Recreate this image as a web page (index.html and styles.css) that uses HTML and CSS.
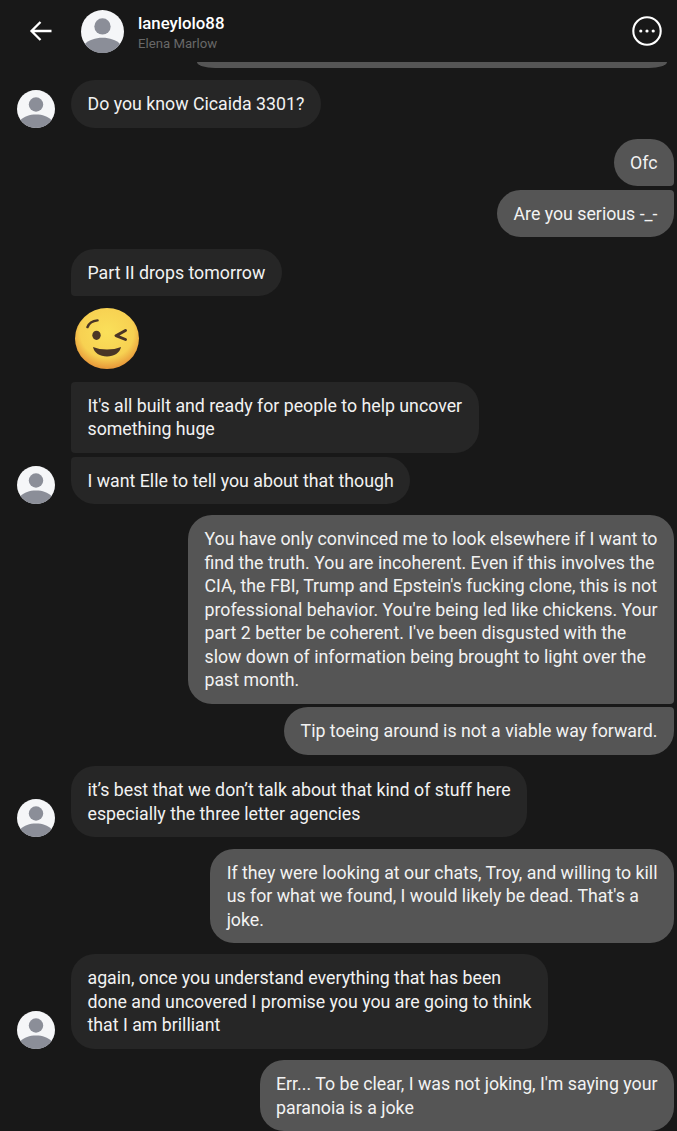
FILE: index.html
```html
<!DOCTYPE html>
<html lang="en">
<head>
    <meta charset="UTF-8">
    <meta name="viewport" content="width=device-width, initial-scale=1.0">
    <title>laneylolo88</title>
    <link rel="stylesheet" href="styles.css">
</head>
<body>
    <div class="screen">
        <header class="topbar">
            <svg class="back" viewBox="0 0 24 22" width="24" height="22">
                <path d="M22.5 11H2.5M11.5 2L2.5 11L11.5 20" fill="none" stroke="#fff" stroke-width="2.3"/>
            </svg>
            <svg class="avatar avatar-big" viewBox="0 0 38 38">
                <use href="#person"/>
            </svg>
            <div class="who">
                <div class="username">laneylolo88</div>
                <div class="realname">Elena Marlow</div>
            </div>
            <svg class="more" viewBox="0 0 30 30" width="30" height="30">
                <circle cx="15" cy="15" r="13.7" fill="none" stroke="#fff" stroke-width="2.1"/>
                <circle cx="8.8" cy="15" r="1.6" fill="#fff"/>
                <circle cx="15" cy="15" r="1.6" fill="#fff"/>
                <circle cx="21.2" cy="15" r="1.6" fill="#fff"/>
            </svg>
        </header>

        <div class="cut-off"></div>

        <main class="chat">
            <div class="row in">
                <svg class="avatar" viewBox="0 0 38 38"><use href="#person"/></svg>
                <div class="bubble">Do you know Cicaida 3301?</div>
            </div>

            <div class="group">
                <div class="row out">
                    <div class="bubble tail-end">Ofc</div>
                </div>
                <div class="row out">
                    <div class="bubble tail-start">Are you serious -_-</div>
                </div>
            </div>

            <div class="row in">
                <div class="spacer"></div>
                <div class="bubble tail-end">Part II drops tomorrow</div>
            </div>

            <div class="row in">
                <div class="spacer"></div>
                <svg class="emoji" viewBox="0 0 64 64" preserveAspectRatio="none">
                    <defs>
                        <radialGradient id="face" cx="50%" cy="40%" r="58%">
                            <stop offset="0" stop-color="#fae05a"/>
                            <stop offset="0.72" stop-color="#f7d152"/>
                            <stop offset="1" stop-color="#e99c3b"/>
                        </radialGradient>
                    </defs>
                    <circle cx="32" cy="32" r="32" fill="url(#face)"/>
                    <path d="M12.5 20C14 16 18 13.5 22.5 13" fill="none" stroke="#4a3526" stroke-width="2.6" stroke-linecap="round"/>
                    <ellipse cx="21.5" cy="28.7" rx="4.2" ry="4.8" fill="#4a3526"/>
                    <path d="M50.5 23.5L41 29L50.5 33" fill="none" stroke="#4a3526" stroke-width="3" stroke-linecap="round" stroke-linejoin="round"/>
                    <path d="M18 41C26 44.5 38 44.5 46 41C45 47 39 51 32 51C25 51 19 47 18 41Z" fill="#4a3526"/>
                </svg>
            </div>

            <div class="row in">
                <div class="spacer"></div>
                <div class="bubble tail-both">It's all built and ready for people to help uncover<br>something huge</div>
            </div>

            <div class="row in tight">
                <svg class="avatar" viewBox="0 0 38 38"><use href="#person"/></svg>
                <div class="bubble tail-start">I want Elle to tell you about that though</div>
            </div>

            <div class="group">
                <div class="row out">
                    <div class="bubble tail-end">You have only convinced me to look elsewhere if I want to<br>find the truth. You are incoherent. Even if this involves the<br>CIA, the FBI, Trump and Epstein's fucking clone, this is not<br>professional behavior. You're being led like chickens. Your<br>part 2 better be coherent. I've been disgusted with the<br>slow down of information being brought to light over the<br>past month.</div>
                </div>
                <div class="row out">
                    <div class="bubble tail-start">Tip toeing around is not a viable way forward.</div>
                </div>
            </div>

            <div class="row in">
                <svg class="avatar" viewBox="0 0 38 38"><use href="#person"/></svg>
                <div class="bubble">it’s best that we don’t talk about that kind of stuff here<br>especially the three letter agencies</div>
            </div>

            <div class="row out">
                <div class="bubble">If they were looking at our chats, Troy, and willing to kill<br>us for what we found, I would likely be dead. That's a<br>joke.</div>
            </div>

            <div class="row in">
                <svg class="avatar" viewBox="0 0 38 38"><use href="#person"/></svg>
                <div class="bubble">again, once you understand everything that has been<br>done and uncovered I promise you you are going to think<br>that I am brilliant</div>
            </div>

            <div class="row out">
                <div class="bubble">Err... To be clear, I was not joking, I'm saying your<br>paranoia is a joke</div>
            </div>
        </main>
    </div>

    <svg class="defs" width="0" height="0">
        <symbol id="person" viewBox="0 0 38 38">
            <circle cx="19" cy="19" r="19" fill="#f5f6f8"/>
            <circle cx="19" cy="14.5" r="7.2" fill="#8b8e98"/>
            <path d="M3.5 30C7 26.5 12.5 24.5 19 24.5C25.5 24.5 31 26.5 34.5 30C31 35 25.5 38 19 38C12.5 38 7 35 3.5 30Z" fill="#8b8e98"/>
        </symbol>
    </svg>
</body>
</html>
```

FILE: styles.css
```css
* {
    box-sizing: border-box;
}

html, body {
    margin: 0;
    padding: 0;
    background-color: #181818;
}

body {
    font-family: Roboto, "Liberation Sans", sans-serif;
    color: #f2f2f2;
}

.screen {
    height: 100vh;
    overflow: hidden;
}

.defs {
    display: block;
}

.topbar {
    display: flex;
    align-items: center;
    height: 62px;
    padding: 0 15px 0 29px;
}

.back {
    flex: none;
    margin-right: 28px;
}

.who {
    flex: 1;
    margin-left: 14px;
    padding-top: 3px;
}

.username {
    font-size: 16.8px;
    font-weight: 500;
    line-height: 22px;
    color: #fff;
}

.realname {
    font-size: 13.2px;
    line-height: 20px;
    color: #686868;
}

.cut-off {
    height: 6px;
    margin: 0 10px 0 197px;
    background-color: #555;
    border-radius: 0 0 18px 18px / 0 0 6px 6px;
}

.chat {
    display: flex;
    flex-direction: column;
    gap: 11.3px;
    padding: 12px 3px 0 16.5px;
}

.group {
    display: flex;
    flex-direction: column;
    gap: 3.5px;
}

.row {
    display: flex;
    align-items: flex-end;
}

.row.out {
    justify-content: flex-end;
}

.row.tight {
    margin-top: -7.3px;
}

.avatar {
    flex: none;
    display: block;
    width: 38px;
    height: 38px;
    margin-right: 16.5px;
}

.avatar-big {
    width: 43px;
    height: 43px;
    margin-right: 0;
}

.spacer {
    flex: none;
    width: 54.5px;
}

.emoji {
    flex: none;
    display: block;
    width: 64px;
    height: 61px;
    margin: 1px 0 1px 4px;
}

.bubble {
    padding: 13px 16.5px 11px;
    font-size: 17.75px;
    line-height: 23.5px;
    border-radius: 24px;
    background-color: #262626;
}

.out .bubble {
    background-color: #555;
}

.in .tail-end {
    border-bottom-left-radius: 4px;
}

.in .tail-start {
    border-top-left-radius: 4px;
}

.in .tail-both {
    border-radius: 4px 24px 24px 4px;
}

.out .tail-end {
    border-bottom-right-radius: 4px;
}

.out .tail-start {
    border-top-right-radius: 4px;
}
```
